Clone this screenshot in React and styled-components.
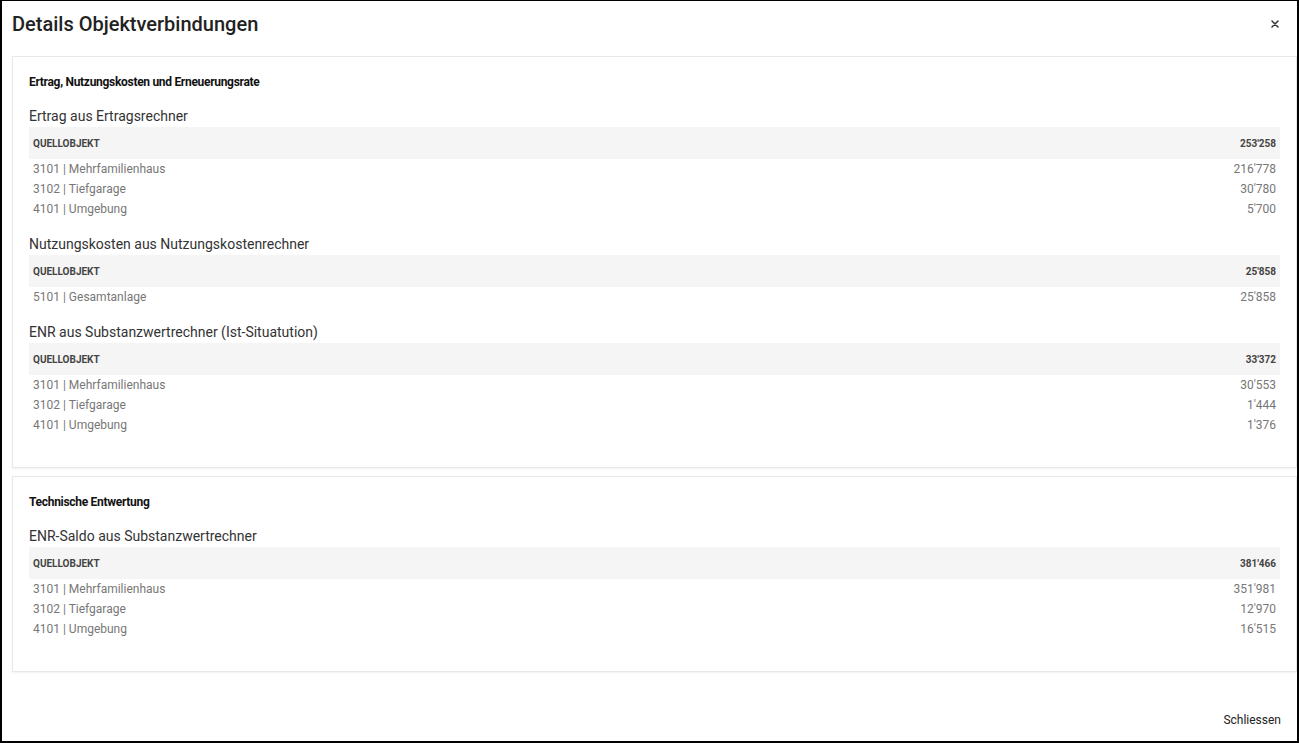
import React from 'react';
import styled, { createGlobalStyle } from 'styled-components';

const sections = [
  {
    heading: 'Ertrag, Nutzungskosten und Erneuerungsrate',
    tables: [
      {
        title: 'Ertrag aus Ertragsrechner',
        total: "253'258",
        rows: [
          ['3101 | Mehrfamilienhaus', "216'778"],
          ['3102 | Tiefgarage', "30'780"],
          ['4101 | Umgebung', "5'700"],
        ],
      },
      {
        title: 'Nutzungskosten aus Nutzungskostenrechner',
        total: "25'858",
        rows: [['5101 | Gesamtanlage', "25'858"]],
      },
      {
        title: 'ENR aus Substanzwertrechner (Ist-Situatution)',
        total: "33'372",
        rows: [
          ['3101 | Mehrfamilienhaus', "30'553"],
          ['3102 | Tiefgarage', "1'444"],
          ['4101 | Umgebung', "1'376"],
        ],
      },
    ],
  },
  {
    heading: 'Technische Entwertung',
    tables: [
      {
        title: 'ENR-Saldo aus Substanzwertrechner',
        total: "381'466",
        rows: [
          ['3101 | Mehrfamilienhaus', "351'981"],
          ['3102 | Tiefgarage', "12'970"],
          ['4101 | Umgebung', "16'515"],
        ],
      },
    ],
  },
];

function App() {
  return (
    <>
      <GlobalStyle />
      <Dialog>
        <Header>
          <Title>Details Objektverbindungen</Title>
          <CloseButton aria-label="close">
            <svg width="8" height="8" viewBox="0 0 8 8">
              <path d="M1 1L7 7M7 1L1 7" stroke="#333" strokeWidth="1.5" strokeLinecap="round" />
            </svg>
          </CloseButton>
        </Header>

        <Content>
          {sections.map((section) => (
            <Card key={section.heading}>
              <CardHeading>{section.heading}</CardHeading>
              {section.tables.map((table) => (
                <Block key={table.title}>
                  <BlockTitle>{table.title}</BlockTitle>
                  <HeadRow>
                    <span>Quellobjekt</span>
                    <span>{table.total}</span>
                  </HeadRow>
                  {table.rows.map(([name, value]) => (
                    <Row key={name}>
                      <span>{name}</span>
                      <span>{value}</span>
                    </Row>
                  ))}
                </Block>
              ))}
            </Card>
          ))}
        </Content>

        <Footer>
          <TextButton>Schliessen</TextButton>
        </Footer>
      </Dialog>
    </>
  );
}

const GlobalStyle = createGlobalStyle`
  body {
    margin: 0;
    background: #fff;
    font-family: Roboto, "Liberation Sans", sans-serif;
  }
  * {
    box-sizing: border-box;
  }
`;

const Dialog = styled.div`
  width: 1299px;
  height: 743px;
  display: flex;
  flex-direction: column;
  background: #fff;
  border: 2px solid #000;
  border-top-width: 1px;
`;

const Header = styled.div`
  height: 55px;
  display: flex;
  align-items: flex-start;
  justify-content: space-between;
  padding: 11px 18px 0 10px;
`;

const Title = styled.h2`
  margin: 0;
  font-size: 20px;
  line-height: 24px;
  font-weight: 500;
  color: #222;
`;

const CloseButton = styled.button`
  border: none;
  background: none;
  padding: 0;
  margin-top: 8px;
  display: flex;
  cursor: pointer;
`;

const Content = styled.div`
  flex: 1;
  display: flex;
  flex-direction: column;
  gap: 8px;
  padding-left: 10px;
`;

const Card = styled.div`
  border: 1px solid #e8e8e8;
  box-shadow: 0 1px 2px rgba(0, 0, 0, 0.06);
  padding: 17px 16px 17px;
`;

const CardHeading = styled.div`
  font-size: 12px;
  line-height: 16px;
  font-weight: 700;
  letter-spacing: -0.3px;
  color: #111;
  margin-bottom: 16px;
`;

const Block = styled.div`
  margin-bottom: 15px;
`;

const BlockTitle = styled.div`
  font-size: 14px;
  line-height: 20px;
  color: #333;
  margin-bottom: 1px;
`;

const HeadRow = styled.div`
  height: 32px;
  display: flex;
  align-items: center;
  justify-content: space-between;
  padding: 0 4px;
  background: #f5f5f5;
  font-size: 10px;
  font-weight: 700;
  text-transform: uppercase;
  color: #444;
`;

const Row = styled.div`
  height: 20px;
  display: flex;
  align-items: center;
  justify-content: space-between;
  padding: 0 4px;
  font-size: 12px;
  color: #777;
`;

const Footer = styled.div`
  height: 44px;
  display: flex;
  align-items: center;
  justify-content: flex-end;
  padding: 2px 16px 0 0;
`;

const TextButton = styled.button`
  border: none;
  background: none;
  padding: 0;
  font-family: Roboto, "Liberation Sans", sans-serif;
  font-size: 12px;
  color: #222;
  cursor: pointer;
`;

export default App;
